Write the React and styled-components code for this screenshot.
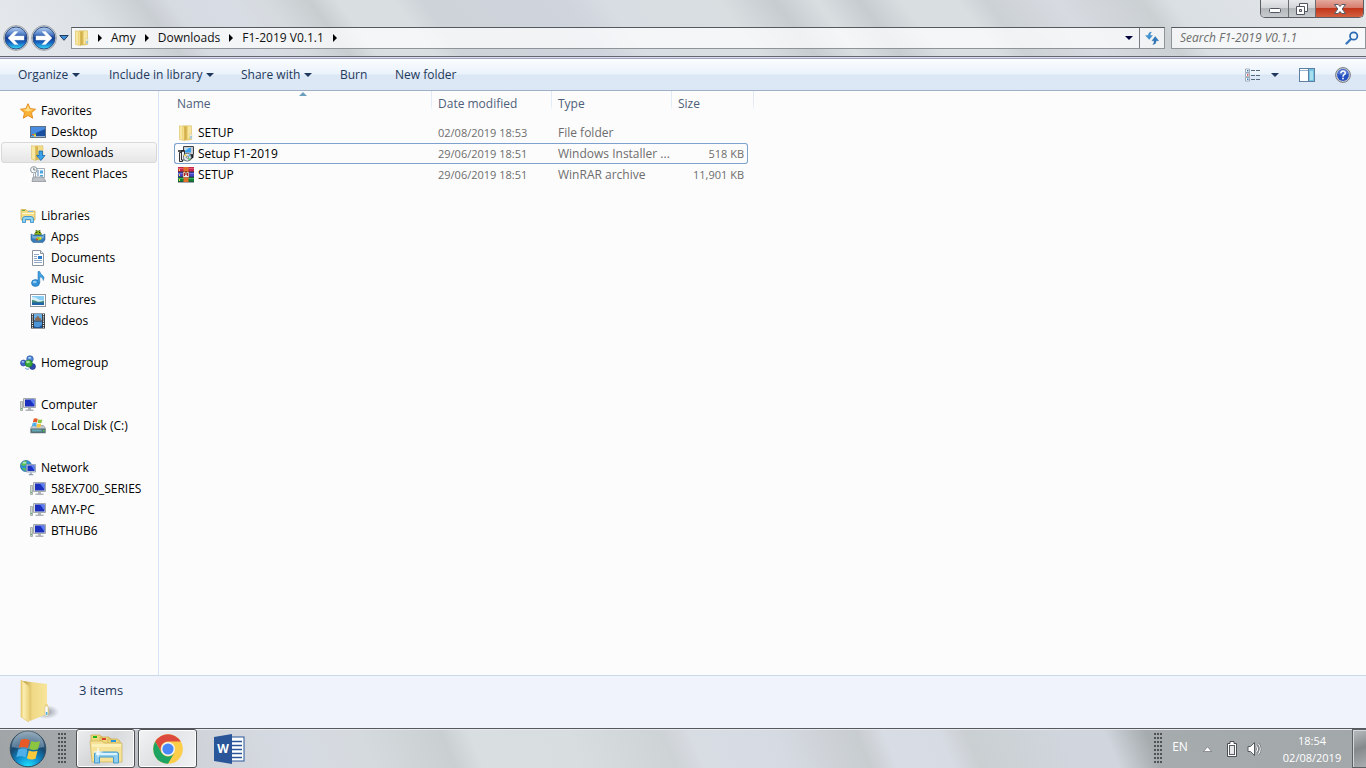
import React from "react";
import styled, { createGlobalStyle, css } from "styled-components";

const GlobalStyle = createGlobalStyle`
  *, *::before, *::after { box-sizing: border-box; }
  body {
    margin: 0;
    background: #fcfcfc;
    color: #000;
    font: 12px/20px "Open Sans", "Noto Sans", sans-serif;
  }
  button, input { font: inherit; color: inherit; }
  button { border: 0; padding: 0; background: none; }
  svg { display: block; flex: none; }
  ul { list-style: none; margin: 0; padding: 0; }
`;

/* ---------- icons ---------- */

const FolderIcon = ({ size = 16 }) => (
  <svg width={size} height={size} viewBox="0 0 16 16" aria-hidden="true">
    <path d="M5 .8h8.500v13.700l-5 .8z" fill="#ecd27a" stroke="#d9bb5c" strokeWidth=".5" />
    <path d="M10 1.200h3v9l-3 4z" fill="#f6e6a0" />
    <path d="M1.500.8l5 .8v14l-5-1.200z" fill="#f8e7a0" stroke="#dcbf5c" strokeWidth=".6" />
    <path d="M6.300 1.600l2.400-.4v13.600l-2.400.9z" fill="#d3b04a" />
    <path d="M4 1.500l1.500.2V15L4 14.700z" fill="#efd67c" />
    <path d="M12 8.500h1.800v5.500H12z" fill="#f7f9fb" stroke="#d0b560" strokeWidth=".4" />
    <path d="M12.500 11h1v2.500h-1z" fill="#58b1e3" />
  </svg>
);

const StarIcon = () => (
  <svg width="16" height="16" viewBox="0 0 16 16" aria-hidden="true">
    <path d="M8 .7l2.200 4.900 5.300.6-4 3.600 1.200 5.400L8 12.500l-4.700 2.700 1.200-5.400-4-3.600 5.300-.6z" fill="#f9b233" stroke="#e2871d" strokeWidth=".9" strokeLinejoin="round" />
    <path d="M8 2.600l1.600 3.700 3.800.5-5.400 1.700-5.100-1.700 3.500-.5z" fill="#fde08b" />
  </svg>
);

const DesktopIcon = () => (
  <svg width="16" height="16" viewBox="0 0 16 16" aria-hidden="true">
    <rect x=".5" y="2.500" width="15" height="11" fill="#2561b5" stroke="#5c7086" />
    <path d="M1 3h14v3L1 11z" fill="#4a8ce0" />
    <path d="M6 13V9l9-4v8z" fill="#1a4fa0" />
    <rect x="1" y="12" width="14" height="1" fill="#9ab4d2" />
    <path d="M2 10h2v1.500H2z" fill="#e8602c" /><path d="M4 9.500h2V11H4z" fill="#8cc63e" /><path d="M2 11.500h2V13H2z" fill="#4fb7ee" /><path d="M4 11h2v1.500H4z" fill="#fbd04a" />
  </svg>
);

const DownloadsIcon = () => (
  <svg width="16" height="16" viewBox="0 0 16 16" aria-hidden="true">
    <path d="M5 .8h8v13l-5 1.200z" fill="#f1dc8a" stroke="#d9bb5c" strokeWidth=".5" />
    <path d="M1.500.5l4 1v14l-4-1.500z" fill="#f8e7a0" stroke="#dcbf5c" strokeWidth=".6" />
    <path d="M5.500 1.500L8 1.200v13.600l-2.500.8z" fill="#d6b54e" />
    <path d="M9 6h3.500v4.500H15L10.800 15.500 6.600 10.500H9z" fill="#3aa1ea" stroke="#1768ad" strokeWidth=".8" />
  </svg>
);

const RecentIcon = () => (
  <svg width="16" height="16" viewBox="0 0 16 16" aria-hidden="true">
    <path d="M5.500 2.500h9v9h-9z" fill="#f4f9fd" stroke="#a3acb4" />
    <path d="M7 5h2M7 7h2M7 9h2" stroke="#5d89b4" />
    <path d="M10 4.500h3v3h-3zM10 9h3v1.500h-3z" fill="#4aa5e0" />
    <path d="M3 11h10l3 4.500H2z" fill="#bcc2c7" stroke="#868d93" strokeWidth=".7" />
    <circle cx="3.800" cy="3.800" r="3.200" fill="#f6f8f9" stroke="#8d989f" />
    <path d="M3.800 1.700v2.300H5.500" fill="none" stroke="#4d5962" strokeWidth=".8" />
    <path d="M3.500 8v5" stroke="#a3acb4" />
  </svg>
);

const LibrariesIcon = () => (
  <svg width="16" height="16" viewBox="0 0 16 16" aria-hidden="true">
    <path d="M1 3V1.500h5L7 3h8v9H1z" fill="#f5dd87" stroke="#d1b152" strokeWidth=".8" />
    <path d="M2 5h12v1H2z" fill="#fff6cd" />
    <rect x="2" y="2" width="3" height="1" fill="#59b33e" />
    <rect x="8" y="3" width="5" height="1" fill="#7fb7dc" />
    <path d="M2.500 14.500V11q0-2.500 2.500-2.500h6q2.500 0 2.500 2.500v3.500h-3V11.500h-5v3z" fill="#8fd1f2" stroke="#3d92c7" strokeWidth=".9" />
  </svg>
);

const AppsIcon = () => (
  <svg width="16" height="16" viewBox="0 0 16 16" aria-hidden="true">
    <path d="M5 6q-1-2 1-3V1l1 1h2l1-1v2q2 1 1 3z" fill="#8db81c" stroke="#536f12" strokeWidth=".7" />
    <rect x="6.200" y="3" width="1" height="1" fill="#25330b" /><rect x="9" y="3" width="1" height="1" fill="#25330b" />
    <path d="M1 5l2 1h10l2-1v6l-2 2.500H3L1 11z" fill="#387bb7" stroke="#275b8b" strokeWidth=".5" />
    <path d="M1.500 5.500l2 1.500h9l2-1.500-1 4H2.500z" fill="#71abd8" />
    <path d="M5.500 10.500l2-3 1.500 1 2-1 .5 3-3 1z" fill="#9ecb2b" /><circle cx="7" cy="10.500" r="1" fill="#db3c26" /><circle cx="10.500" cy="9" r="1" fill="#f6dc35" />
  </svg>
);

const DocumentIcon = () => (
  <svg width="16" height="16" viewBox="0 0 16 16" aria-hidden="true">
    <path d="M2.500.5h8l3 3v12h-11z" fill="#fff" stroke="#8c959d" />
    <path d="M10.500.5v3h3" fill="#dfe5ea" stroke="#8c959d" />
    <path d="M4 4.500h5M4 6.500h3M4 8.500h3M4 10.500h8M4 12.500h8" stroke="#91a9c6" />
    <rect x="8" y="6" width="4" height="3" fill="#2b7bcb" />
  </svg>
);

const MusicIcon = () => (
  <svg width="16" height="16" viewBox="0 0 16 16" aria-hidden="true">
    <ellipse cx="5.500" cy="12" rx="4" ry="3.400" fill="#3293d9" stroke="#1d6bb0" strokeWidth=".6" />
    <ellipse cx="4.700" cy="11" rx="2" ry="1.200" fill="#8fcbf4" />
    <path d="M8 12V.5h1.800q.5 2.500 2.700 3.800 2.600 1.800.8 5.200 0-3-3.500-3.700V12z" fill="#41a2e2" stroke="#1d6bb0" strokeWidth=".5" />
  </svg>
);

const PicturesIcon = () => (
  <svg width="16" height="16" viewBox="0 0 16 16" aria-hidden="true">
    <rect x=".5" y="2.500" width="15" height="12" fill="#fff" stroke="#8d969e" />
    <rect x="2" y="4" width="12" height="9" fill="#88cdf3" />
    <path d="M2 5q4 0 6 2t6 1v2H2z" fill="#d9f0fb" />
    <path d="M2 8q3 0 5 1.500 3 1 7-1V13H2z" fill="#3f8c73" />
    <path d="M2 10.500h12V13H2z" fill="#2066a8" />
  </svg>
);

const VideosIcon = () => (
  <svg width="16" height="16" viewBox="0 0 16 16" aria-hidden="true">
    <rect x="1" y=".5" width="14" height="15" fill="#30353a" />
    <path d="M2.500 1v14M13.500 1v14" stroke="#eef1f3" strokeWidth="1.200" strokeDasharray="1.200 1" />
    <rect x="4" y="1" width="8" height="6.500" fill="#6aaee4" /><rect x="4" y="8.500" width="8" height="6.500" fill="#4c96d8" />
    <path d="M5 7.500q0-3 1.500-3l1.500-2 1 2 2 1v2z" fill="#8b6a54" />
    <path d="M4 13l2 1h3l3-2v3H4z" fill="#1f5597" />
  </svg>
);

const HomegroupIcon = () => (
  <svg width="16" height="16" viewBox="0 0 16 16" aria-hidden="true">
    <circle cx="10" cy="4" r="3.300" fill="#4e86d6" stroke="#2850a0" strokeWidth=".6" />
    <circle cx="3.500" cy="8" r="3" fill="#3d63c9" stroke="#233f95" strokeWidth=".6" />
    <circle cx="12.500" cy="11.500" r="3" fill="#2d48ad" stroke="#1b2f80" strokeWidth=".6" />
    <circle cx="8.800" cy="8.500" r="3.600" fill="#38a63b" stroke="#1e7426" strokeWidth=".6" />
    <ellipse cx="8" cy="7" rx="1.900" ry="1.200" fill="#a8e497" />
    <ellipse cx="9.600" cy="2.800" rx="1.600" ry=".9" fill="#b9d6fa" /><ellipse cx="2.900" cy="6.800" rx="1.300" ry=".9" fill="#a9c4f5" />
    <path d="M5 13q2 2 4 1" stroke="#6d9be0" fill="none" />
  </svg>
);

const ComputerIcon = () => (
  <svg width="16" height="16" viewBox="0 0 16 16" aria-hidden="true">
    <path d="M.5 4.500h2v9h-2z" fill="#cfd6d2" stroke="#9aa39f" strokeWidth=".8" />
    <rect x="1" y="11" width="1" height="1" fill="#43b649" />
    <path d="M3.500 1.500h12v9h-12z" fill="#d8dadd" stroke="#a4a9ae" />
    <rect x="5" y="2.500" width="9.500" height="7" fill="#1b31bd" />
    <path d="M10 2.500h4.500v6z" fill="#5b7df0" />
    <path d="M8 11h3v1.500h2.500v1.500h-8v-1.500H8z" fill="#b0b5b9" />
  </svg>
);

const Flag = ({ x, y, s }) => (
  <g transform={`translate(${x} ${y}) scale(${s})`}>
    <path d="M1.500 1.200Q4 .2 6.200 1.500L5.200 5.600Q3 4.500.4 5.400z" fill="#e75a27" />
    <path d="M6.900 1.800Q9 2.900 11.600 2L10.500 6.200Q8 7 5.900 6z" fill="#8cc540" />
    <path d="M.2 6.200Q2.700 5.200 5 6.400L4 10.500Q1.700 9.300-.9 10.300z" fill="#4fb0e9" />
    <path d="M5.700 6.800Q8 7.900 10.300 7L9.200 11.200Q6.800 12 4.700 10.900z" fill="#fbca3b" />
  </g>
);

const DiskIcon = () => (
  <svg width="16" height="16" viewBox="0 0 16 16" aria-hidden="true">
    <path d="M2.500 7.500h11l2.200 3v4.500H.3v-4.500z" fill="#c4cacd" stroke="#7c8489" strokeWidth=".6" />
    <rect x=".8" y="10.500" width="14.600" height="4.500" rx="1" fill="#567078" />
    <path d="M2 11.500h9.500v2H2z" fill="#62a8b4" /><rect x="13" y="12" width="1.500" height="1.500" fill="#47d24e" />
    <Flag x={2.500} y={-0.300} s={0.850} />
  </svg>
);

const NetworkIcon = () => (
  <svg width="16" height="16" viewBox="0 0 16 16" aria-hidden="true">
    <circle cx="6" cy="6" r="5.600" fill="#2b8fd0" stroke="#1c6196" strokeWidth=".6" />
    <path d="M2 3q3-3 5-2l-1 2 1 1-3 2-3-1zM2 8l3 0 1 3-2-1z" fill="#61c24a" />
    <ellipse cx="4.500" cy="2.800" rx="2" ry="1" fill="#cdf0fa" opacity=".7" />
    <path d="M6.500 4.500h9v7.500h-9z" fill="#d3d9e6" stroke="#8794ac" strokeWidth=".8" />
    <rect x="7.500" y="5.500" width="7" height="5.500" fill="#1c33c4" /><path d="M11 5.500h3.500v5z" fill="#5b7df0" />
    <path d="M10.300 12.500h1.400v1.500h1.500v1.200H8.800v-1.200h1.500z" fill="#8f9bb0" />
  </svg>
);

const InstallerIcon = () => (
  <svg width="16" height="16" viewBox="0 0 16 16" aria-hidden="true">
    <path d="M5.500.5h10v8h-10z" fill="#c6cbd0" stroke="#3d4348" />
    <rect x="7" y="2" width="6" height="4.500" fill="#3a9fe8" /><path d="M7 2h4L7 5z" fill="#b6e1fb" />
    <path d="M12 9h3.500v2.500l-3 2.500z" fill="#1c1f22" />
    <path d="M1.500 6.500h3v9h-3z" fill="#e7e9ea" stroke="#1c1f22" strokeWidth=".9" />
    <path d="M3.500 4.500h3v9.500h-3z" fill="#f2f3f4" stroke="#1c1f22" strokeWidth=".9" />
    <path d="M0 5h6" stroke="#1c1f22" strokeWidth="1.500" />
    <circle cx="9.300" cy="11.200" r="4" fill="#dfe6ee" stroke="#4d5559" strokeWidth=".8" />
    <path d="M9.300 11.200L6 9.500l1.500-1.500z" fill="#f3e23a" /><path d="M9.300 11.200L12.500 13 11 14.500z" fill="#45c15a" /><path d="M9.300 11.200l3.300-1.200-1-1.700z" fill="#4ab3e8" />
    <circle cx="9.300" cy="11.200" r="1.100" fill="#fff" stroke="#444" strokeWidth=".6" />
  </svg>
);

const RarIcon = () => (
  <svg width="16" height="16" viewBox="0 0 16 16" aria-hidden="true">
    <rect y="0" width="16" height="5" fill="#c4284d" /><rect y="1" width="16" height="1" fill="#e25a78" />
    <rect y="5" width="16" height="5" fill="#4346c1" /><rect y="6" width="16" height="1" fill="#7376e0" />
    <rect y="10" width="16" height="5" fill="#118337" /><rect y="11" width="16" height="1" fill="#3fb35e" />
    <path d="M0 5h16M0 10h16M0 15h16" stroke="#222742" strokeWidth=".8" />
    <rect x="5.500" width="5" height="15" fill="#e0702a" />
    <rect x="5" y="5" width="6" height="5.500" fill="#f4f1ea" stroke="#8b3f22" strokeWidth=".5" />
    <path d="M6.500 6v3M9.500 6v3" stroke="#c21e1e" strokeWidth="1.200" /><rect x="7.500" y="4" width="1" height="4" fill="#5d2b16" />
    <path d="M1.500 2v2M1.500 7v2M1.500 12v2" stroke="#f4d34c" />
  </svg>
);

const BigFolderIcon = () => (
  <svg width="40" height="44" viewBox="0 0 40 44" aria-hidden="true">
    <defs>
      <linearGradient id="bf1" x1="0" x2="1"><stop offset="0" stopColor="#e9cd70" /><stop offset=".3" stopColor="#fbeeb0" /><stop offset="1" stopColor="#e8cf76" /></linearGradient>
      <linearGradient id="bf2" x1="0" x2="1"><stop offset="0" stopColor="#b8983c" /><stop offset=".4" stopColor="#f0d986" /><stop offset="1" stopColor="#f6e59c" /></linearGradient>
      <radialGradient id="bf3"><stop offset="0" stopColor="#7a7f88" stopOpacity=".8" /><stop offset="1" stopColor="#7a7f88" stopOpacity="0" /></radialGradient>
    </defs>
    <ellipse cx="26" cy="32" rx="13" ry="7" fill="url(#bf3)" />
    <path d="M3 1l24 3v30l-17 7z" fill="url(#bf2)" />
    <path d="M25 24h2.500q1.500 4 1.500 9l-4 3z" fill="#eed680" />
    <path d="M1 0l8 6q1 2 1 5v27l-1.500 4L1 37z" fill="url(#bf1)" stroke="#e0c56b" strokeWidth=".6" />
    <rect x="25" y="26" width="3" height="10" rx="1" fill="#fff" stroke="#c5b276" strokeWidth=".5" />
    <rect x="25.800" y="32" width="1.600" height="3" fill="#4eaee5" />
  </svg>
);

const Orb = () => (
  <svg width="38" height="38" viewBox="0 0 38 38" aria-hidden="true">
    <defs>
      <radialGradient id="orb" cx=".5" cy="1" r="1"><stop offset="0" stopColor="#1ee4ff" /><stop offset=".35" stopColor="#0f8ccc" /><stop offset=".65" stopColor="#17486f" /><stop offset="1" stopColor="#6e8ca2" /></radialGradient>
    </defs>
    <circle cx="19" cy="19" r="17.800" fill="url(#orb)" stroke="#314a5c" />
    <path d="M3 17A16 16 0 0 1 35 17Q19 21 3 17z" fill="#fff" opacity=".28" />
    <Flag x={9} y={7.500} s={1.900} />
  </svg>
);

const TaskExplorer = () => (
  <svg width="34" height="32" viewBox="0 0 34 32" aria-hidden="true">
    <path d="M2 4V2h9l2 2v6H2zM11 7V4h9l2 2v5H11zM19 9V6h9l3 2v5H19z" fill="#efd77b" stroke="#c7a74a" strokeWidth=".7" />
    <rect x="4" y="3" width="4" height="2" fill="#21b41b" /><rect x="13" y="5" width="4" height="2" fill="#d6452c" /><rect x="22" y="7" width="5" height="2" fill="#2498de" />
    <path d="M1 8h12l2 2h18v19H3z" fill="#f6e397" stroke="#cfb058" strokeWidth=".7" />
    <path d="M3 11h29v3H3z" fill="#fcf3c1" opacity=".8" />
    <path d="M5.500 30V21q0-2 2-2h20q2 0 2 2v9h-5v-6h-14v6z" fill="#8fcdee" stroke="#459bcb" />
    <path d="M7 21h21" stroke="#d9f2fc" strokeWidth="2" />
    <path d="M9 13l1 5 5 1-5 1-1 5-1-5-5-1 5-1z" fill="#fff" opacity=".85" />
  </svg>
);

const ChromeIcon = () => (
  <svg width="30" height="30" viewBox="0 0 30 30" aria-hidden="true">
    <circle cx="15" cy="15" r="14.800" fill="#fccd48" />
    <path d="M2.200 7.600A14.800 14.800 0 0 1 27.800 7.600H15A7.400 7.400 0 0 0 8.600 18.700z" fill="#dd4b3e" />
    <path d="M2.200 7.600A14.800 14.800 0 0 0 15 29.800L21.400 18.700A7.400 7.400 0 0 1 8.600 18.700z" fill="#1da362" />
    <circle cx="15" cy="15" r="7" fill="#f3f4f5" /><circle cx="15" cy="15" r="5.600" fill="#4a89f5" />
  </svg>
);

const WordIcon = () => (
  <svg width="32" height="32" viewBox="0 0 32 32" aria-hidden="true">
    <rect x="16" y="4" width="14" height="24" fill="#fff" stroke="#2a5699" />
    <path d="M18 8.500h10M18 12.500h10M18 16.500h10M18 20.500h10M18 24.500h10" stroke="#2a5699" strokeWidth="1.500" />
    <path d="M0 4l18-3v30L0 28z" fill="#2a5699" />
    <text x="9" y="20" textAnchor="middle" fontFamily="Open Sans, sans-serif" fontWeight="700" fontSize="12" fill="#fff">W</text>
  </svg>
);

const NavOrb = ({ flip }) => (
  <svg width="26" height="26" viewBox="0 0 26 26" aria-hidden="true">
    <defs>
      <linearGradient id="nav" x1="0" y1="0" x2="0" y2="1">
        <stop offset="0" stopColor="#b9d0ee" /><stop offset=".3" stopColor="#5a86cc" /><stop offset=".5" stopColor="#123b92" /><stop offset=".7" stopColor="#1764c0" /><stop offset="1" stopColor="#35dcfb" />
      </linearGradient>
    </defs>
    <circle cx="13" cy="13" r="12.400" fill="#dfe3e6" stroke="#9ba1a6" />
    <circle cx="13" cy="13" r="11" fill="url(#nav)" stroke="#2f4f85" />
    <path transform={flip ? "translate(26 0) scale(-1 1)" : undefined} d="M5 13l6.500-6.500h3.500l-4 4.500H21v4H11l4 4.500h-3.500z" fill="#fff" stroke="#dfe8f5" strokeWidth=".5" />
  </svg>
);

const RefreshIcon = () => (
  <svg width="14" height="14" viewBox="0 0 14 14" aria-hidden="true">
    <path d="M6.500 1Q3.300 1 3.300 4.500H.6L4.200 8.500 7.500 4.500H5.100Q5 2.600 6.500 1z" fill="#3d94d6" stroke="#2a6dad" strokeWidth=".3" />
    <path d="M7.800 13.500Q11.300 13.500 11.100 9.800H13.700L10.200 5.500 6.900 9.800H9.200Q9.300 12 7.800 13.500z" fill="#2f78bd" stroke="#1e5c9c" strokeWidth=".3" />
  </svg>
);

const SearchIcon = () => (
  <svg width="14" height="14" viewBox="0 0 14 14" aria-hidden="true">
    <path d="M1.500 12.500L6 8" stroke="#3a78bd" strokeWidth="2.400" strokeLinecap="round" />
    <circle cx="8.700" cy="5" r="3.700" fill="#eef7fd" stroke="#2a69b4" strokeWidth="1.700" />
  </svg>
);

const ViewIcon = () => (
  <svg width="16" height="14" viewBox="0 0 16 14" aria-hidden="true">
    <path d="M.5 1h4v3.500h-4zM.5 5.200h4v3.500h-4zM.5 9.500h4V13h-4z" fill="#fff" stroke="#8b99ab" strokeWidth=".8" />
    <rect x="2" y="2" width="1.500" height="1.500" fill="#3c7fc2" /><rect x="2" y="6.200" width="1.500" height="1.500" fill="#d34242" /><rect x="2" y="10.500" width="1.500" height="1.500" fill="#3c7fc2" />
    <path d="M6 2.500h4M11 2.500h4M6 7.500h4M11 7.500h4M6 11.500h4M11 11.500h4" stroke="#56687f" />
  </svg>
);

const PreviewIcon = () => (
  <svg width="16" height="14" viewBox="0 0 16 14" aria-hidden="true">
    <rect x=".5" y=".5" width="15" height="13" fill="#fff" stroke="#5c7fa3" />
    <path d="M1 2.500h9" stroke="#9db3c9" />
    <rect x="10" y="1" width="5" height="12" fill="#72c3e0" /><rect x="11" y="3" width="3" height="9" fill="#a8e0f0" /><path d="M9.500 1v12" stroke="#5c7fa3" />
  </svg>
);

const HelpIcon = () => (
  <svg width="16" height="16" viewBox="0 0 16 16" aria-hidden="true">
    <circle cx="8" cy="8" r="7.400" fill="#c9ccd2" stroke="#777b84" />
    <circle cx="8" cy="8" r="5.900" fill="#2550bf" /><path d="M2.500 7a5.600 5.600 0 0 1 11 0Q8 9 2.500 7z" fill="#5377d4" />
    <path d="M5.800 6.300Q6 4 8.100 4t2.200 2q0 1-1.100 1.700T8 9.700" fill="none" stroke="#fff" strokeWidth="1.500" /><rect x="7.200" y="10.700" width="1.600" height="1.600" fill="#fff" />
  </svg>
);

const BatteryIcon = () => (
  <svg width="12" height="16" viewBox="0 0 12 16" aria-hidden="true">
    <path d="M4 .5h4V2.500h2.500v13h-9v-13H4z" fill="#fff" stroke="#4b4e52" />
    <rect x="3.500" y="4.500" width="5" height="9" fill="#e7e9eb" stroke="#5a5d61" />
  </svg>
);

const SpeakerIcon = () => (
  <svg width="16" height="16" viewBox="0 0 16 16" aria-hidden="true">
    <path d="M1 5.500h2.500l4-4v13l-4-4H1z" fill="#fff" stroke="#4b4e52" strokeWidth=".9" />
    <path d="M9.500 5q2 3 0 6M11.500 3q3.500 5 0 10" fill="none" stroke="#606468" strokeWidth="2.200" />
    <path d="M9.500 5q2 3 0 6M11.500 3q3.500 5 0 10" fill="none" stroke="#fff" strokeWidth="1.100" />
  </svg>
);

const MinimizeIcon = () => (
  <svg width="14" height="12" viewBox="0 0 14 12" aria-hidden="true">
    <rect x="1.500" y="5.500" width="11" height="4" rx="1" fill="#fff" stroke="#525462" />
  </svg>
);

const RestoreIcon = () => (
  <svg width="14" height="14" viewBox="0 0 14 14" aria-hidden="true">
    <path d="M4.500 1.500h8v8h-8z" fill="#fff" stroke="#525462" />
    <path d="M1.500 4.500h8v8h-8z" fill="#fff" stroke="#525462" />
    <path d="M4.500 7.500h2v2h-2z" fill="#d5d7da" stroke="#525462" />
  </svg>
);

const CloseIcon = () => (
  <svg width="14" height="12" viewBox="0 0 14 12" aria-hidden="true">
    <path d="M1.500 1.500h3.700L7 3.500l1.800-2h3.700L9.200 6l3.300 4.500H8.800L7 8.500l-1.800 2H1.500L4.800 6z" fill="#fff" stroke="#555866" />
  </svg>
);

/* ---------- layout ---------- */

const Screen = styled.div`
  min-height: 100vh;
  display: flex;
  flex-direction: column;
`;

const TitleBar = styled.header`
  height: 59px;
  display: flex;
  flex-direction: column;
  border-bottom: 1px solid #a3a3bf;
  box-shadow: inset 0 -1px #dcdff0, inset 0 -2px #63666f;
  background: linear-gradient(53deg,
    #e6eaed 0%, #e1e5e9 5%, #dce1e6 9%, #c9ced3 13%, #d6dae1 15%, #d8dce4 19%,
    #d5dade 22%, #c8cdd0 25%, #d9dee1 27%, #d9dee1 31%, #cdd3d8 33%, #cfd4dd 43%,
    #d8dde3 46%, #d9dee1 54%, #c7ccd0 58%, #d9dee1 61%, #c6cccf 64%, #d9dee1 67%,
    #d9dee1 71%, #ccd1d5 73%, #d7dbe1 78%, #cbd0d3 84%, #dadfe3 86%, #e3e7ea 100%);
`;

const CaptionButtons = styled.div`
  align-self: flex-end;
  display: flex;
  height: 18px;
  margin-right: 2px;
  border: 1px solid #5b5d63;
  border-top: 0;
  border-radius: 0 0 5px 5px;
  overflow: hidden;
`;

const CaptionButton = styled.button`
  width: ${(p) => p.$width}px;
  display: flex;
  align-items: center;
  justify-content: center;
  background: ${(p) => (p.$danger
    ? "linear-gradient(#e4a99d, #d67d6c 45%, #c2361c 50%, #d4603f)"
    : "linear-gradient(#e7e9eb, #d3d6d8 45%, #b4b8bb 50%, #c8cbce)")};
  & + & { border-left: 1px solid #6b6d73; }
`;

const NavRow = styled.div`
  display: flex;
  align-items: center;
  height: 24px;
  margin-top: 8px;
  padding-left: 3px;
`;

const NavButtons = styled.nav`
  display: flex;
  align-items: center;
  gap: 2px;
  width: 68px;
`;

const Caret = styled.span`
  display: inline-block;
  flex: none;
  border: 4px solid transparent;
  border-top-color: ${(p) => p.$color || "#1e395b"};
  border-bottom: 0;
`;

const RightCaret = styled.span`
  border: 4px solid transparent;
  border-left-color: #000;
  border-right: 0;
`;

const Field = styled.div`
  display: flex;
  align-items: center;
  height: 22px;
  border: 1px solid #8f9498;
  border-top-color: #55585c;
  background: rgba(255, 255, 255, 0.72);
`;

const AddressBar = styled(Field)`
  flex: 1;
  padding-left: 2px;
`;

const Crumbs = styled.ol`
  flex: 1;
  display: flex;
  align-items: center;
  list-style: none;
  margin: 0;
  padding: 0 0 0 8px;
`;

const Crumb = styled.li`
  display: flex;
  align-items: center;
  a { padding: 0 9px; color: #111; text-decoration: none; }
`;

const FieldButton = styled.button`
  height: 20px;
  width: ${(p) => p.$width}px;
  display: flex;
  align-items: center;
  justify-content: center;
  border-left: ${(p) => (p.$divided ? "1px solid #777b80" : "0")};
`;

const SearchBox = styled(Field)`
  width: 195px;
  margin-left: 6px;
  padding: 0 6px 0 8px;
  input {
    flex: 1;
    min-width: 0;
    padding: 0;
    border: 0;
    background: none;
    outline: 0;
    &::placeholder { color: #6d6d6d; font-style: italic; opacity: 1; }
  }
`;

const Toolbar = styled.div`
  display: flex;
  align-items: center;
  justify-content: space-between;
  height: 32px;
  padding: 0 15px 0 18px;
  border-bottom: 1px solid #a0aec6;
  background: linear-gradient(#fbfdff, #eaf2fb 48%, #dce7f5 52%, #dde8f6);
  color: #1e395b;
`;

const Commands = styled.div`
  display: grid;
  grid-template-columns: 91px 132px 99px 55px auto;
`;

const ToolGroup = styled.div`
  display: flex;
  align-items: center;
  gap: ${(p) => p.$gap}px;
`;

const ToolButton = styled.button`
  display: flex;
  align-items: center;
  gap: 4px;
`;

const Body = styled.div`
  flex: 1;
  display: flex;
`;

const Sidebar = styled.nav`
  width: 159px;
  flex: none;
  padding: 9px 1px 0;
  border-right: 1px solid #d6e5f5;
`;

const Group = styled.ul`
  margin-bottom: 21px;
`;

const SideLink = styled.a`
  display: flex;
  align-items: center;
  gap: 5px;
  height: 21px;
  padding-left: ${(p) => (p.$child ? 28 : 18)}px;
  border: 1px solid transparent;
  border-radius: 3px;
  color: #000;
  text-decoration: none;
  white-space: nowrap;
  ${(p) => p.$selected && css`
    border-color: #d9d9d9;
    background: linear-gradient(#f9f9f9, #e6e6e6);
  `}
`;

const FilePane = styled.main`
  flex: 1;
  padding-left: 15px;
`;

const FileTable = styled.table`
  width: 578px;
  table-layout: fixed;
  border-collapse: separate;
  border-spacing: 0;
`;

const HeadCell = styled.th`
  position: relative;
  width: ${(p) => p.$width}px;
  height: 31px;
  padding: 3px 0 0 ${(p) => (p.$first ? 3 : 6)}px;
  vertical-align: top;
  text-align: left;
  font-weight: 400;
  color: #4c607a;
  ${(p) => !p.$open && css`
    background: linear-gradient(#dfe9f5, #e3ecf6 70%, #fcfcfc) right top / 1px 20px no-repeat;
  `}
`;

const SortMark = styled.span`
  position: absolute;
  top: 1px;
  left: 0;
  right: 0;
  width: 8px;
  margin: 0 auto;
  border: 4px solid transparent;
  border-bottom: 4px solid #6c9fbd;
  border-top: 0;
`;

const Cell = styled.td`
  height: 21px;
  padding: 0 0 0 6px;
  font-size: ${(p) => (p.$numeric ? 11 : 12)}px;
  line-height: 19px;
  white-space: nowrap;
  color: #6d6d6d;
  border: 1px solid transparent;
  border-width: 1px 0;
  &:first-child { padding-left: 3px; border-left-width: 1px; border-radius: 3px 0 0 3px; color: #000; }
  &:nth-child(4) { padding-right: 3px; text-align: right; border-right-width: 1px; border-radius: 0 3px 3px 0; }
  ${(p) => p.$focused && css`border-color: #7da2ce;`}
`;

const NameCell = styled.span`
  display: flex;
  align-items: center;
  gap: 4px;
`;

const Details = styled.footer`
  display: flex;
  gap: 19px;
  height: 53px;
  padding: 4px 20px;
  border-top: 1px solid #c8d9ea;
  background: #f0f3fc;
  color: #1e395b;
  font-size: 13px;
`;

const Taskbar = styled.footer`
  display: flex;
  height: 40px;
  border-top: 1px solid #55585f;
  box-shadow: inset 0 1px #e8ebed;
  background: linear-gradient(68deg,
    #a0a4a7 0%, #a5a9ac 6%, #cfd3d8 14%, #d6dae2 22%, #d5dade 27%, #cacfd1 33%,
    #d9dee1 35%, #d8dde0 42%, #ced3d6 49%, #d8dce3 51%, #d6dae2 57%, #c8cdd0 63%,
    #d8dce4 65%, #d7dbe3 69%, #cacfd2 71%, #d1d6de 78%, #d1d6de 81%, #a6abae 84%, #a2a7aa 100%);
`;

const TaskButton = styled.button`
  width: ${(p) => p.$width || 59}px;
  margin-right: 3px;
  display: flex;
  align-items: center;
  justify-content: center;
  ${(p) => p.$open && css`
    border: 1px solid #4f5357;
    border-radius: 3px;
    box-shadow: inset 0 0 0 1px #fff;
    background: linear-gradient(125deg, rgba(255,255,255,.8), rgba(255,255,255,.45) 50%, rgba(255,255,255,.7));
  `}
`;

const Grip = styled.span`
  width: 9px;
  height: 30px;
  margin: 4px 9px 0 0;
  background: radial-gradient(circle at 1px 1px, #505356 1px, transparent 1px) 0 0 / 3px 4px;
`;

const Tray = styled.div`
  margin-left: auto;
  display: flex;
  color: #fff;
`;

const TrayButton = styled.button`
  width: ${(p) => p.$width}px;
  padding-bottom: ${(p) => p.$lift || 0}px;
  display: flex;
  align-items: center;
  justify-content: center;
`;

const TrayMark = styled.svg`
  width: 9px;
  height: 6px;
`;

const Clock = styled.button`
  width: 80px;
  font-size: 11px;
  line-height: 17px;
  text-align: center;
  time { display: block; }
`;

const ShowDesktop = styled.button`
  width: 14px;
  border: 1px solid #5d6165;
  border-right: 0;
  box-shadow: inset 1px 1px #d5d8da;
  background: linear-gradient(160deg, #b9bdc0, #85898c 50%, #a9adb0);
`;

/* ---------- data ---------- */

const groups = [
  [
    ["Favorites", StarIcon],
    ["Desktop", DesktopIcon],
    ["Downloads", DownloadsIcon, true],
    ["Recent Places", RecentIcon],
  ],
  [
    ["Libraries", LibrariesIcon],
    ["Apps", AppsIcon],
    ["Documents", DocumentIcon],
    ["Music", MusicIcon],
    ["Pictures", PicturesIcon],
    ["Videos", VideosIcon],
  ],
  [["Homegroup", HomegroupIcon]],
  [
    ["Computer", ComputerIcon],
    ["Local Disk (C:)", DiskIcon],
  ],
  [
    ["Network", NetworkIcon],
    ["58EX700_SERIES", ComputerIcon],
    ["AMY-PC", ComputerIcon],
    ["BTHUB6", ComputerIcon],
  ],
];

const files = [
  { icon: FolderIcon, name: "SETUP", date: "02/08/2019 18:53", type: "File folder", size: "" },
  { icon: InstallerIcon, name: "Setup F1-2019", date: "29/06/2019 18:51", type: "Windows Installer ...", size: "518 KB", focused: true },
  { icon: RarIcon, name: "SETUP", date: "29/06/2019 18:51", type: "WinRAR archive", size: "11,901 KB" },
];

export default function App() {
  return (
    <Screen>
      <GlobalStyle />
      <TitleBar>
        <CaptionButtons>
          <CaptionButton $width={27} aria-label="Minimize"><MinimizeIcon /></CaptionButton>
          <CaptionButton $width={27} aria-label="Restore"><RestoreIcon /></CaptionButton>
          <CaptionButton $width={48} $danger aria-label="Close"><CloseIcon /></CaptionButton>
        </CaptionButtons>
        <NavRow>
          <NavButtons>
            <button aria-label="Back"><NavOrb /></button>
            <button aria-label="Forward"><NavOrb flip /></button>
            <button aria-label="Recent pages">
              <svg width="10" height="6" viewBox="0 0 10 6"><path d="M.8.5h8.400L5 5.300z" fill="#3f8fd2" stroke="#1d3f66" /></svg>
            </button>
          </NavButtons>
          <AddressBar>
            <FolderIcon />
            <Crumbs>
              <Crumb><RightCaret /></Crumb>
              {["Amy", "Downloads", "F1-2019 V0.1.1"].map((name) => (
                <Crumb key={name}><a href="#">{name}</a><RightCaret /></Crumb>
              ))}
            </Crumbs>
            <FieldButton $width={20} aria-label="Previous locations"><Caret $color="#00003c" /></FieldButton>
            <FieldButton $width={25} $divided aria-label="Refresh"><RefreshIcon /></FieldButton>
          </AddressBar>
          <SearchBox>
            <input type="text" aria-label="Search" placeholder="Search F1-2019 V0.1.1" />
            <SearchIcon />
          </SearchBox>
        </NavRow>
      </TitleBar>

      <Toolbar>
        <Commands>
          <ToolButton>Organize <Caret /></ToolButton>
          <ToolButton>Include in library <Caret /></ToolButton>
          <ToolButton>Share with <Caret /></ToolButton>
          <ToolButton>Burn</ToolButton>
          <ToolButton>New folder</ToolButton>
        </Commands>
        <ToolGroup $gap={20}>
          <ToolGroup $gap={10}>
            <ToolButton aria-label="Change view"><ViewIcon /></ToolButton>
            <ToolButton aria-label="More view options"><Caret /></ToolButton>
          </ToolGroup>
          <ToolButton aria-label="Show the preview pane"><PreviewIcon /></ToolButton>
          <ToolButton aria-label="Help"><HelpIcon /></ToolButton>
        </ToolGroup>
      </Toolbar>

      <Body>
        <Sidebar>
          {groups.map((items) => (
            <Group key={items[0][0]}>
              {items.map(([name, Icon, selected], i) => (
                <li key={name}>
                  <SideLink href="#" $child={i > 0} $selected={selected}><Icon />{name}</SideLink>
                </li>
              ))}
            </Group>
          ))}
        </Sidebar>
        <FilePane>
          <FileTable>
            <thead>
              <tr>
                <HeadCell $width={258} $first>Name<SortMark /></HeadCell>
                <HeadCell $width={120}>Date modified</HeadCell>
                <HeadCell $width={120}>Type</HeadCell>
                <HeadCell $width={76} $open>Size</HeadCell>
                <HeadCell as="td" $width={4} />
              </tr>
            </thead>
            <tbody>
              {files.map((f) => (
                <tr key={f.name + f.type}>
                  <Cell $focused={f.focused}><NameCell><f.icon />{f.name}</NameCell></Cell>
                  <Cell $focused={f.focused} $numeric>{f.date}</Cell>
                  <Cell $focused={f.focused}>{f.type}</Cell>
                  <Cell $focused={f.focused} $numeric>{f.size}</Cell>
                </tr>
              ))}
            </tbody>
          </FileTable>
        </FilePane>
      </Body>

      <Details><BigFolderIcon />3 items</Details>

      <Taskbar>
        <TaskButton $width={55} aria-label="Start"><Orb /></TaskButton>
        <Grip />
        <TaskButton $open aria-label="File Explorer"><TaskExplorer /></TaskButton>
        <TaskButton $open aria-label="Chrome"><ChromeIcon /></TaskButton>
        <TaskButton aria-label="Word"><WordIcon /></TaskButton>
        <Tray>
          <Grip />
          <TrayButton $width={16} $lift={4}>EN</TrayButton>
          <TrayButton $width={38} aria-label="Show hidden icons">
            <TrayMark viewBox="0 0 9 6"><path d="M.5 5.500h8L4.500.8z" fill="#fff" stroke="#606468" strokeWidth=".6" /></TrayMark>
          </TrayButton>
          <TrayButton $width={12} aria-label="Battery"><BatteryIcon /></TrayButton>
          <TrayButton $width={34} aria-label="Volume"><SpeakerIcon /></TrayButton>
          <Clock><time>18:54</time><time>02/08/2019</time></Clock>
          <ShowDesktop aria-label="Show desktop" />
        </Tray>
      </Taskbar>
    </Screen>
  );
}
